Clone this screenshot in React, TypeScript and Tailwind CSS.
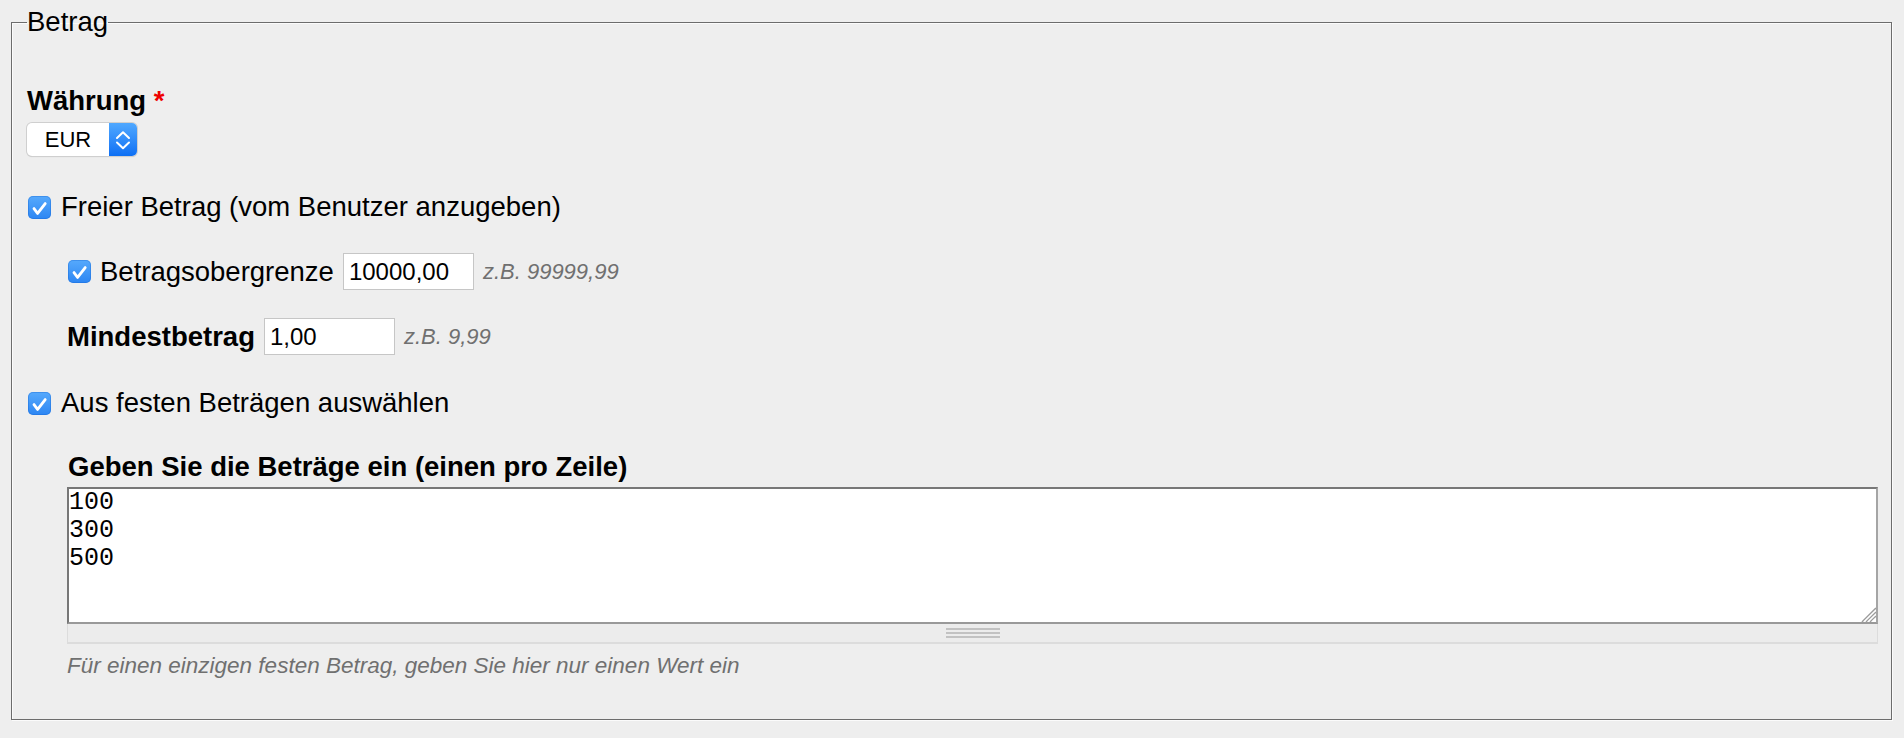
import React from "react";

const Checkbox: React.FC = () => (
  <span className="flex h-[23px] w-[23px] shrink-0 items-center justify-center rounded-[5px] bg-linear-to-b from-[#56a9fc] to-[#2c86f3] shadow-[inset_0_0_0_1px_rgba(20,100,210,0.35)]">
    <svg width="23" height="23" viewBox="0 0 23 23" fill="none">
      <path d="M6 12.6 L9.6 17.4 L17.2 7.6" stroke="#fff" strokeWidth="2.8" strokeLinecap="round" strokeLinejoin="round" />
    </svg>
  </span>
);

const Hint: React.FC<{ children: React.ReactNode }> = ({ children }) => (
  <span className="text-[22px] italic text-[#707070]">{children}</span>
);

const AmountInput: React.FC<{ value: string }> = ({ value }) => (
  <input
    defaultValue={value}
    className="h-[37px] w-[131px] border border-[#c6c6c6] bg-white px-[5px] text-[24px] text-black outline-none"
  />
);

export default function App() {
  return (
    <div className="min-h-screen bg-[#eeeeee] pt-[6px] pl-[11px] pr-[12px] pb-[18px] font-['Liberation_Sans',Arial,sans-serif] text-[27.5px] leading-[32px] text-black">
      <fieldset className="border border-[#6c6c6c] pl-[15px] pr-[13px] pt-[47px] pb-[40px] shadow-[1px_1px_0_#fbfbfb,inset_1px_1px_0_#fbfbfb]">
        <legend className="p-0 leading-[32px]">Betrag</legend>

        {/* currency */}
        <div className="font-bold">
          Währung <span className="text-[#ee0000]">*</span>
        </div>
        <div className="mt-[6px] flex h-[33px] w-[110px] rounded-[5px] bg-white shadow-[0_0_0_1px_#cfcfcf,0_1px_1px_rgba(0,0,0,0.18)]">
          <span className="flex flex-1 items-center justify-center text-[22px]">EUR</span>
          <span className="flex w-[28px] items-center justify-center rounded-r-[5px] bg-linear-to-b from-[#4fa8ff] to-[#0c6ff4]">
            <svg width="28" height="33" viewBox="0 0 28 33" fill="none">
              <path d="M8 15 L14 9.3 L20 15" stroke="#fff" strokeWidth="2" strokeLinecap="round" strokeLinejoin="round" />
              <path d="M8 19.5 L14 25.2 L20 19.5" stroke="#fff" strokeWidth="2" strokeLinecap="round" strokeLinejoin="round" />
            </svg>
          </span>
        </div>

        {/* free amount */}
        <div className="mt-[35px] flex h-[32px] items-center gap-[10px] pl-[1px]">
          <Checkbox />
          <span>Freier Betrag (vom Benutzer anzugeben)</span>
        </div>

        <div className="ml-[41px] mt-[30px] flex h-[37px] items-center gap-[9px]">
          <Checkbox />
          <span>Betragsobergrenze</span>
          <AmountInput value="10000,00" />
          <Hint>z.B. 99999,99</Hint>
        </div>

        <div className="ml-[40px] mt-[28px] flex h-[37px] items-center gap-[9px]">
          <span className="font-bold">Mindestbetrag</span>
          <AmountInput value="1,00" />
          <Hint>z.B. 9,99</Hint>
        </div>

        {/* fixed amounts */}
        <div className="mt-[32px] flex h-[32px] items-center gap-[10px] pl-[1px]">
          <Checkbox />
          <span>Aus festen Beträgen auswählen</span>
        </div>

        <div className="ml-[40px] mt-[32px]">
          <div className="pl-[1px] font-bold">Geben Sie die Beträge ein (einen pro Zeile)</div>
          <div className="relative mt-[4px]">
            <textarea
              defaultValue={"100\n300\n500"}
              className="block h-[137px] w-full resize-none border-2 border-t-[#777777] border-l-[#777777] border-r-[#a5a5a5] border-b-[#999999] bg-white p-0 font-['Liberation_Mono',monospace] text-[25px] leading-[28px] text-black outline-none"
            />
            <svg className="absolute bottom-[2px] right-[2px]" width="20" height="20" viewBox="0 0 20 20" fill="none">
              <path d="M20 6 L6 20 M20 10 L10 20 M20 14 L14 20" stroke="#9c9c9c" strokeWidth="1.6" />
              <path d="M20 7.8 L7.8 20 M20 11.8 L11.8 20 M20 15.8 L15.8 20" stroke="#ffffff" strokeWidth="1.2" />
            </svg>
          </div>
          <div className="flex h-[20px] flex-col items-center justify-center gap-[2px] border-x border-b-2 border-[#dcdcdc] bg-[#ececec]">
            <span className="h-[2px] w-[54px] bg-[#c2c2c2]" />
            <span className="h-[2px] w-[54px] bg-[#c2c2c2]" />
            <span className="h-[2px] w-[54px] bg-[#c2c2c2]" />
          </div>
          <div className="mt-[9px] text-[22.5px] italic leading-[26px] text-[#707070]">
            Für einen einzigen festen Betrag, geben Sie hier nur einen Wert ein
          </div>
        </div>
      </fieldset>
    </div>
  );
}
